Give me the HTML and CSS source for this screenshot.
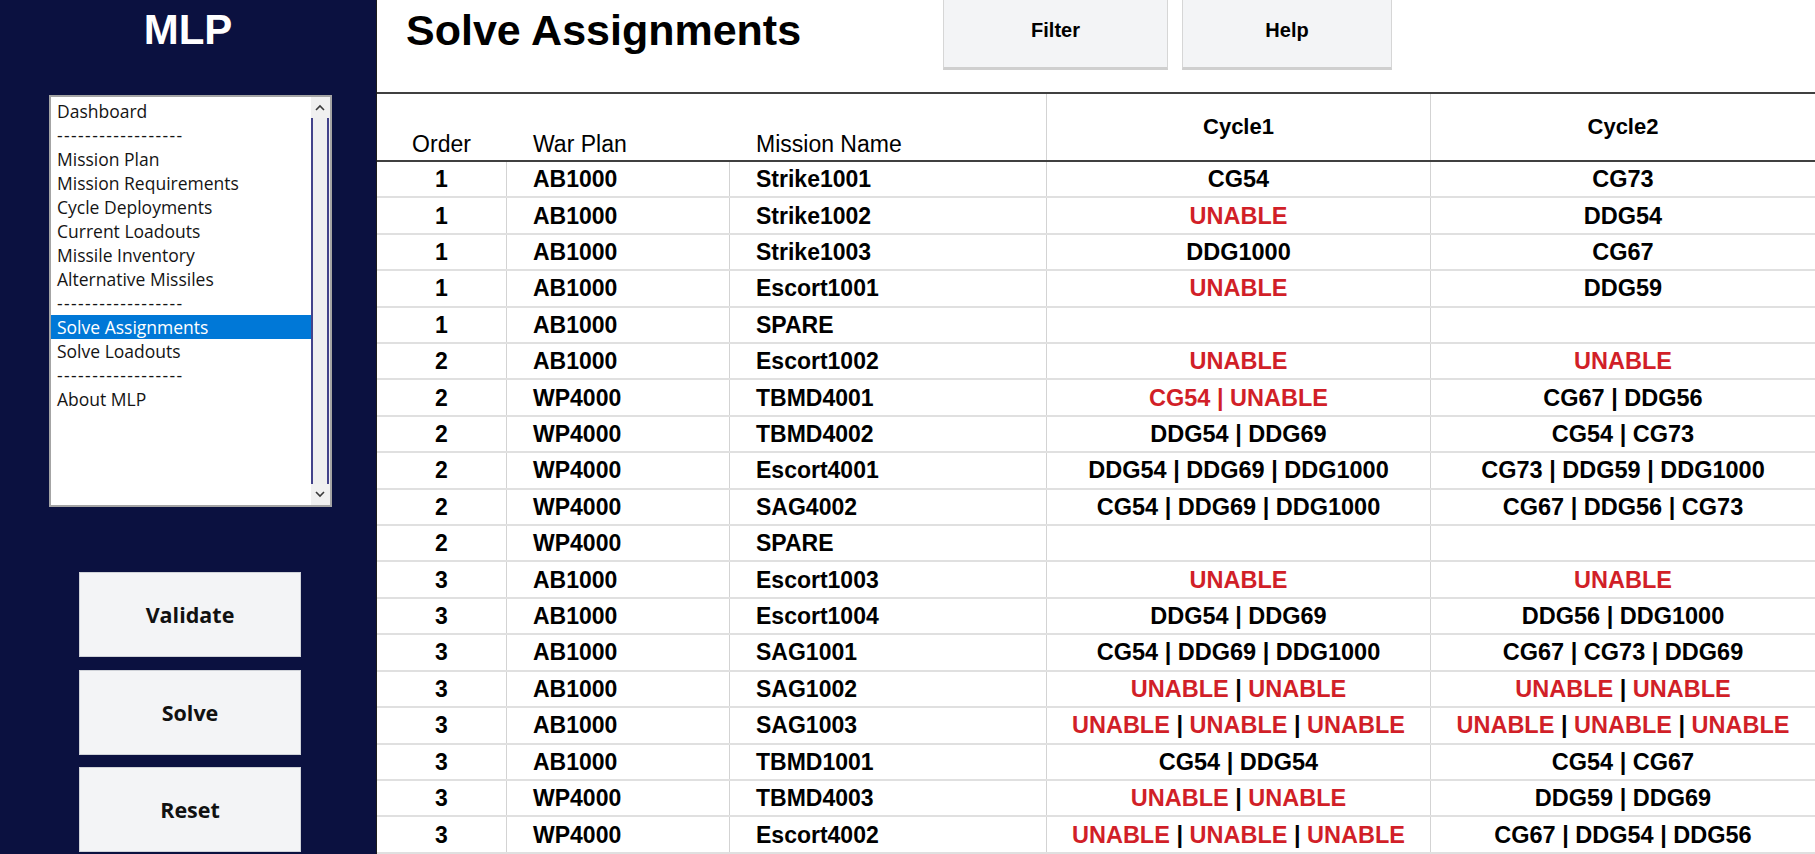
FILE: index.html
```html
<!DOCTYPE html>
<html lang="en">
<head>
<meta charset="utf-8">
<title>MLP - Solve Assignments</title>
<link rel="stylesheet" href="styles.css">
</head>
<body>
<div class="app">
  <aside class="sidebar">
    <div class="brand">MLP</div>
    <div class="listbox">
      <ul class="items">
        <li>Dashboard</li>
        <li class="sep">------------------</li>
        <li>Mission Plan</li>
        <li>Mission Requirements</li>
        <li>Cycle Deployments</li>
        <li>Current Loadouts</li>
        <li>Missile Inventory</li>
        <li>Alternative Missiles</li>
        <li class="sep">------------------</li>
        <li class="sel">Solve Assignments</li>
        <li>Solve Loadouts</li>
        <li class="sep">------------------</li>
        <li>About MLP</li>
      </ul>
      <div class="scrollbar">
        <div class="arrow">
          <svg width="10" height="7" viewBox="0 0 10 7"><path d="M1 6 L5 2 L9 6" fill="none" stroke="#3a3a3a" stroke-width="1.6"/></svg>
        </div>
        <div class="thumb"></div>
        <div class="arrow">
          <svg width="10" height="7" viewBox="0 0 10 7"><path d="M1 1 L5 5 L9 1" fill="none" stroke="#3a3a3a" stroke-width="1.6"/></svg>
        </div>
      </div>
    </div>
    <div class="actions">
      <button class="side-btn">Validate</button>
      <button class="side-btn">Solve</button>
      <button class="side-btn">Reset</button>
    </div>
  </aside>

  <main class="main">
    <header class="topbar">
      <h1 class="title">Solve Assignments</h1>
      <button class="top-btn filter">Filter</button>
      <button class="top-btn help">Help</button>
    </header>

    <div class="sheet">
      <div class="row head">
        <div class="hc hc-order">Order</div>
        <div class="hc hc-left">War Plan</div>
        <div class="hc hc-left">Mission Name</div>
        <div class="hc hc-cycle">Cycle1</div>
        <div class="hc hc-cycle">Cycle2</div>
      </div>

      <div class="row"><div class="c c-order">1</div><div class="c c-left">AB1000</div><div class="c c-left">Strike1001</div><div class="c c-cycle">CG54</div><div class="c c-cycle">CG73</div></div>
      <div class="row"><div class="c c-order">1</div><div class="c c-left">AB1000</div><div class="c c-left">Strike1002</div><div class="c c-cycle"><span class="bad">UNABLE</span></div><div class="c c-cycle">DDG54</div></div>
      <div class="row"><div class="c c-order">1</div><div class="c c-left">AB1000</div><div class="c c-left">Strike1003</div><div class="c c-cycle">DDG1000</div><div class="c c-cycle">CG67</div></div>
      <div class="row"><div class="c c-order">1</div><div class="c c-left">AB1000</div><div class="c c-left">Escort1001</div><div class="c c-cycle"><span class="bad">UNABLE</span></div><div class="c c-cycle">DDG59</div></div>
      <div class="row"><div class="c c-order">1</div><div class="c c-left">AB1000</div><div class="c c-left">SPARE</div><div class="c c-cycle"></div><div class="c c-cycle"></div></div>
      <div class="row"><div class="c c-order">2</div><div class="c c-left">AB1000</div><div class="c c-left">Escort1002</div><div class="c c-cycle"><span class="bad">UNABLE</span></div><div class="c c-cycle"><span class="bad">UNABLE</span></div></div>
      <div class="row"><div class="c c-order">2</div><div class="c c-left">WP4000</div><div class="c c-left">TBMD4001</div><div class="c c-cycle"><span class="bad">CG54&nbsp;|&nbsp;UNABLE</span></div><div class="c c-cycle">CG67&nbsp;|&nbsp;DDG56</div></div>
      <div class="row"><div class="c c-order">2</div><div class="c c-left">WP4000</div><div class="c c-left">TBMD4002</div><div class="c c-cycle">DDG54&nbsp;|&nbsp;DDG69</div><div class="c c-cycle">CG54&nbsp;|&nbsp;CG73</div></div>
      <div class="row"><div class="c c-order">2</div><div class="c c-left">WP4000</div><div class="c c-left">Escort4001</div><div class="c c-cycle">DDG54&nbsp;|&nbsp;DDG69&nbsp;|&nbsp;DDG1000</div><div class="c c-cycle">CG73&nbsp;|&nbsp;DDG59&nbsp;|&nbsp;DDG1000</div></div>
      <div class="row"><div class="c c-order">2</div><div class="c c-left">WP4000</div><div class="c c-left">SAG4002</div><div class="c c-cycle">CG54&nbsp;|&nbsp;DDG69&nbsp;|&nbsp;DDG1000</div><div class="c c-cycle">CG67&nbsp;|&nbsp;DDG56&nbsp;|&nbsp;CG73</div></div>
      <div class="row"><div class="c c-order">2</div><div class="c c-left">WP4000</div><div class="c c-left">SPARE</div><div class="c c-cycle"></div><div class="c c-cycle"></div></div>
      <div class="row"><div class="c c-order">3</div><div class="c c-left">AB1000</div><div class="c c-left">Escort1003</div><div class="c c-cycle"><span class="bad">UNABLE</span></div><div class="c c-cycle"><span class="bad">UNABLE</span></div></div>
      <div class="row"><div class="c c-order">3</div><div class="c c-left">AB1000</div><div class="c c-left">Escort1004</div><div class="c c-cycle">DDG54&nbsp;|&nbsp;DDG69</div><div class="c c-cycle">DDG56&nbsp;|&nbsp;DDG1000</div></div>
      <div class="row"><div class="c c-order">3</div><div class="c c-left">AB1000</div><div class="c c-left">SAG1001</div><div class="c c-cycle">CG54&nbsp;|&nbsp;DDG69&nbsp;|&nbsp;DDG1000</div><div class="c c-cycle">CG67&nbsp;|&nbsp;CG73&nbsp;|&nbsp;DDG69</div></div>
      <div class="row"><div class="c c-order">3</div><div class="c c-left">AB1000</div><div class="c c-left">SAG1002</div><div class="c c-cycle"><span class="bad">UNABLE</span>&nbsp;|&nbsp;<span class="bad">UNABLE</span></div><div class="c c-cycle"><span class="bad">UNABLE</span>&nbsp;|&nbsp;<span class="bad">UNABLE</span></div></div>
      <div class="row"><div class="c c-order">3</div><div class="c c-left">AB1000</div><div class="c c-left">SAG1003</div><div class="c c-cycle"><span class="bad">UNABLE</span>&nbsp;|&nbsp;<span class="bad">UNABLE</span>&nbsp;|&nbsp;<span class="bad">UNABLE</span></div><div class="c c-cycle"><span class="bad">UNABLE</span>&nbsp;|&nbsp;<span class="bad">UNABLE</span>&nbsp;|&nbsp;<span class="bad">UNABLE</span></div></div>
      <div class="row"><div class="c c-order">3</div><div class="c c-left">AB1000</div><div class="c c-left">TBMD1001</div><div class="c c-cycle">CG54&nbsp;|&nbsp;DDG54</div><div class="c c-cycle">CG54&nbsp;|&nbsp;CG67</div></div>
      <div class="row"><div class="c c-order">3</div><div class="c c-left">WP4000</div><div class="c c-left">TBMD4003</div><div class="c c-cycle"><span class="bad">UNABLE</span>&nbsp;|&nbsp;<span class="bad">UNABLE</span></div><div class="c c-cycle">DDG59&nbsp;|&nbsp;DDG69</div></div>
      <div class="row"><div class="c c-order">3</div><div class="c c-left">WP4000</div><div class="c c-left">Escort4002</div><div class="c c-cycle"><span class="bad">UNABLE</span>&nbsp;|&nbsp;<span class="bad">UNABLE</span>&nbsp;|&nbsp;<span class="bad">UNABLE</span></div><div class="c c-cycle">CG67&nbsp;|&nbsp;DDG54&nbsp;|&nbsp;DDG56</div></div>
    </div>
  </main>
</div>
</body>
</html>
```

FILE: styles.css
```css
* { box-sizing: border-box; }

html, body {
  margin: 0;
  padding: 0;
}

body {
  width: 1815px;
  height: 854px;
  overflow: hidden;
  background: #ffffff;
  font-family: "Liberation Sans", Arial, sans-serif;
  color: #000;
}

.app {
  display: flex;
  height: 854px;
}

/* ---------- Sidebar ---------- */
.sidebar {
  width: 377px;
  flex: none;
  background: #0b1140;
  border-right: 1px solid #1c1c1c;
  display: flex;
  flex-direction: column;
}

.brand {
  height: 95px;
  padding-top: 5px;
  color: #ffffff;
  font: bold 42px/50px "Liberation Sans", Arial, sans-serif;
  text-align: center;
}

.listbox {
  margin-left: 49px;
  width: 283px;
  height: 412px;
  border: 2px solid #a4a4a4;
  background: #ffffff;
  display: flex;
}

.items {
  list-style: none;
  margin: 0;
  padding: 2px 0 0 0;
  flex: 1;
  min-width: 0;
  font: 17.5px/24px "Open Sans", sans-serif;
  color: #141414;
}

.items li {
  height: 24px;
  padding-left: 6px;
  white-space: nowrap;
}

.items li.sep {
  letter-spacing: 1.4px;
}

.items li.sel {
  background: #0078d7;
  color: #ffffff;
}

.scrollbar {
  width: 19px;
  flex: none;
  background: #f0f0f0;
  display: flex;
  flex-direction: column;
}

.arrow {
  height: 21px;
  display: flex;
  align-items: center;
  justify-content: center;
  padding-right: 1px;
}

.thumb {
  flex: 1;
  width: 18px;
  border-left: 2px solid #43438a;
  border-right: 2px solid #43438a;
  background: #efefef;
}

.actions {
  margin-top: 65px;
  margin-left: 79px;
  display: flex;
  flex-direction: column;
  gap: 12.5px;
}

.side-btn {
  width: 222px;
  height: 85px;
  padding: 0;
  background: #f3f4f6;
  border: 1px solid #cfd2d8;
  color: #111111;
  font: bold 21.5px "Open Sans", sans-serif;
}

/* ---------- Main ---------- */
.main {
  flex: 1;
  min-width: 0;
  display: flex;
  flex-direction: column;
}

.topbar {
  height: 94px;
  flex: none;
  border-bottom: 2px solid #404040;
  display: flex;
  align-items: flex-start;
}

.title {
  margin: 0;
  width: 566px;
  padding: 5px 0 0 29px;
  font: bold 43px/50px "Liberation Sans", Arial, sans-serif;
  color: #000000;
  white-space: nowrap;
}

.top-btn {
  height: 70px;
  padding: 0 0 7px 0;
  background: #f3f4f6;
  border: 1px solid #d6d6d6;
  border-top: none;
  border-bottom: 3px solid #cfcfcf;
  color: #000000;
  font: bold 20px "Liberation Sans", Arial, sans-serif;
}

.filter { width: 225px; }
.help { width: 210px; margin-left: 14px; }

/* ---------- Sheet ---------- */
.sheet {
  display: flex;
  flex-direction: column;
}

.row {
  display: grid;
  grid-template-columns: 129px 223px 317px 384px 385px;
  height: 36.42px;
  border-bottom: 2px solid #e0e0e0;
}

.row.head {
  height: 68px;
  border-bottom: 2px solid #404040;
}

.hc {
  font: 23px/26px "Liberation Sans", Arial, sans-serif;
  display: flex;
  align-items: flex-end;
  padding-bottom: 3px;
}

.hc-order { justify-content: center; }
.hc-left { padding-left: 27px; }

.hc-cycle {
  font-weight: bold;
  font-size: 22px;
  align-items: center;
  justify-content: center;
  padding-bottom: 0;
  border-left: 1px solid #d3d3d3;
}

.c {
  display: flex;
  align-items: center;
  font: bold 23px/26px "Liberation Sans", Arial, sans-serif;
  white-space: nowrap;
  border-left: 1px solid #d3d3d3;
}

.c-order {
  justify-content: center;
  border-left: none;
}

.c-left { padding-left: 26px; }

.c-cycle {
  justify-content: center;
  font-size: 23.5px;
}

.bad {
  color: #d11f28;
}
```
